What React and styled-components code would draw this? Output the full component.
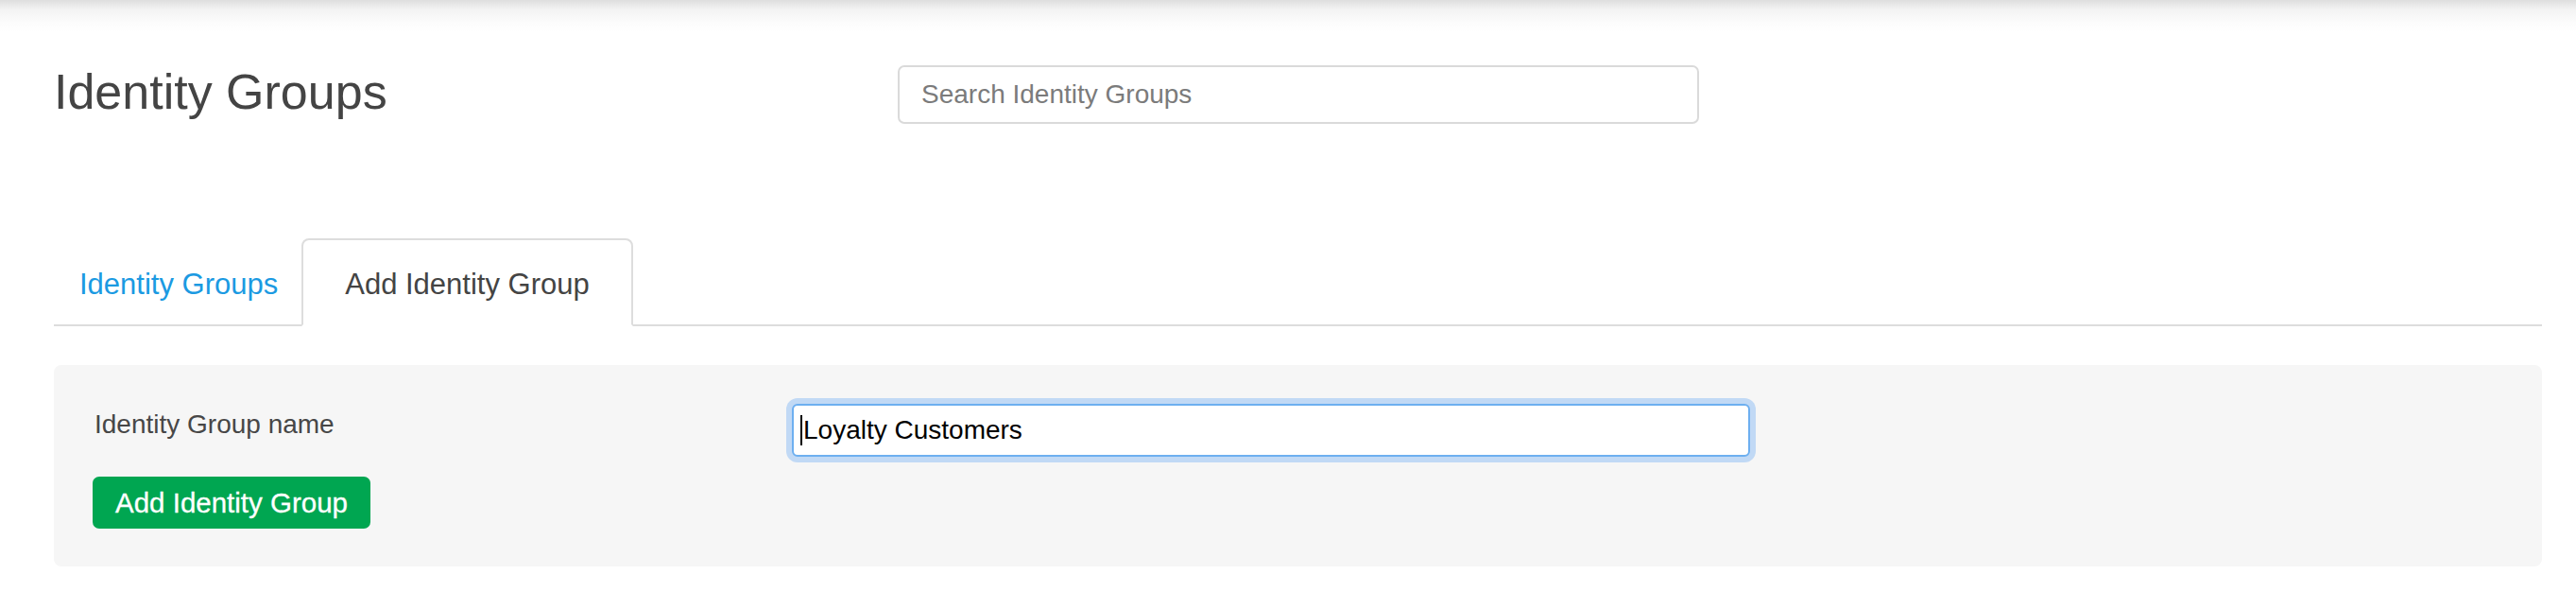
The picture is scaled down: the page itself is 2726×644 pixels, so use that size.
import styled, { createGlobalStyle } from "styled-components";

const GlobalStyle = createGlobalStyle`
  body {
    margin: 0;
    min-height: 100vh;
    font-family: "Liberation Sans", Arial, Helvetica, sans-serif;
    background: linear-gradient(
        to bottom,
        #dedede 0px,
        #f3f3f3 10px,
        #fcfcfc 24px,
        #ffffff 34px
      )
      no-repeat #ffffff;
  }
`;

const Page = styled.div`
  padding: 0 36px 40px 57px;
`;

const Header = styled.header`
  display: grid;
  grid-template-columns: 893px 848px;
  align-items: start;
  padding-top: 67px;
`;

const Title = styled.h1`
  margin: 0;
  font-size: 52px;
  line-height: 60px;
  font-weight: 400;
  color: #444;
`;

const SearchInput = styled.input`
  margin-top: 2px;
  box-sizing: border-box;
  width: 100%;
  height: 62px;
  padding: 0 23px;
  border: 2px solid #dadada;
  border-radius: 7px;
  font-family: inherit;
  font-size: 28px;
  color: #555;
  outline: none;

  &::placeholder {
    color: #7b7b7b;
  }
`;

const Tabs = styled.nav`
  display: flex;
  align-items: flex-end;
  margin-top: 121px;
  border-bottom: 2px solid #dddddd;
`;

const Tab = styled.a`
  margin-bottom: -2px;
  padding: 27px ${(p) => (p.$active ? "44px" : "23px")} 22px
    ${(p) => (p.$active ? "44px" : "25px")};
  border: 2px solid transparent;
  border-radius: 8px 8px 0 0;
  font-size: 31px;
  line-height: 40px;
  text-decoration: none;
  cursor: pointer;
  color: ${(p) => (p.$active ? "#444" : "#1b9ae2")};
  background: ${(p) => (p.$active ? "#fff" : "transparent")};
  border-color: ${(p) =>
    p.$active ? "#dddddd #dddddd transparent #dddddd" : "transparent"};
`;

const Panel = styled.section`
  margin-top: 41px;
  padding: 41px 42px 40px 41px;
  background: #f6f6f6;
  border-radius: 8px;
`;

const FieldRow = styled.div`
  display: grid;
  grid-template-columns: 740px 1014px;
  align-items: start;
`;

const Label = styled.label`
  margin-top: 2px;
  padding-left: 2px;
  font-size: 28px;
  line-height: 40px;
  color: #474747;
`;

const InputWrap = styled.div`
  position: relative;
`;

const TextInput = styled.input`
  box-sizing: border-box;
  width: 100%;
  height: 56px;
  padding: 0 10px;
  border: 2px solid #6daff0;
  border-radius: 6px;
  box-shadow: 0 0 0 6px #c1d9f5;
  font-family: inherit;
  font-size: 28px;
  color: #000;
  background: #fff;
  outline: none;
`;

const Caret = styled.span`
  position: absolute;
  left: 9px;
  top: 12px;
  width: 2px;
  height: 32px;
  background: #000;
`;

const SubmitButton = styled.button`
  display: block;
  margin-top: 21px;
  height: 55px;
  padding: 0 24px;
  border: none;
  border-radius: 7px;
  background: #00a651;
  color: #fff;
  font-family: inherit;
  font-size: 29.5px;
  -webkit-text-stroke: 0.3px #fff;
  cursor: pointer;
`;

const App = () => {
  return (
    <>
      <GlobalStyle />
      <Page>
        <Header>
          <Title>Identity Groups</Title>
          <SearchInput placeholder="Search Identity Groups" />
        </Header>

        <Tabs>
          <Tab>Identity Groups</Tab>
          <Tab $active>Add Identity Group</Tab>
        </Tabs>

        <Panel>
          <FieldRow>
            <Label htmlFor="group-name">Identity Group name</Label>
            <InputWrap>
              <TextInput id="group-name" defaultValue="Loyalty Customers" />
              <Caret />
            </InputWrap>
          </FieldRow>
          <SubmitButton>Add Identity Group</SubmitButton>
        </Panel>
      </Page>
    </>
  );
};

export default App;
